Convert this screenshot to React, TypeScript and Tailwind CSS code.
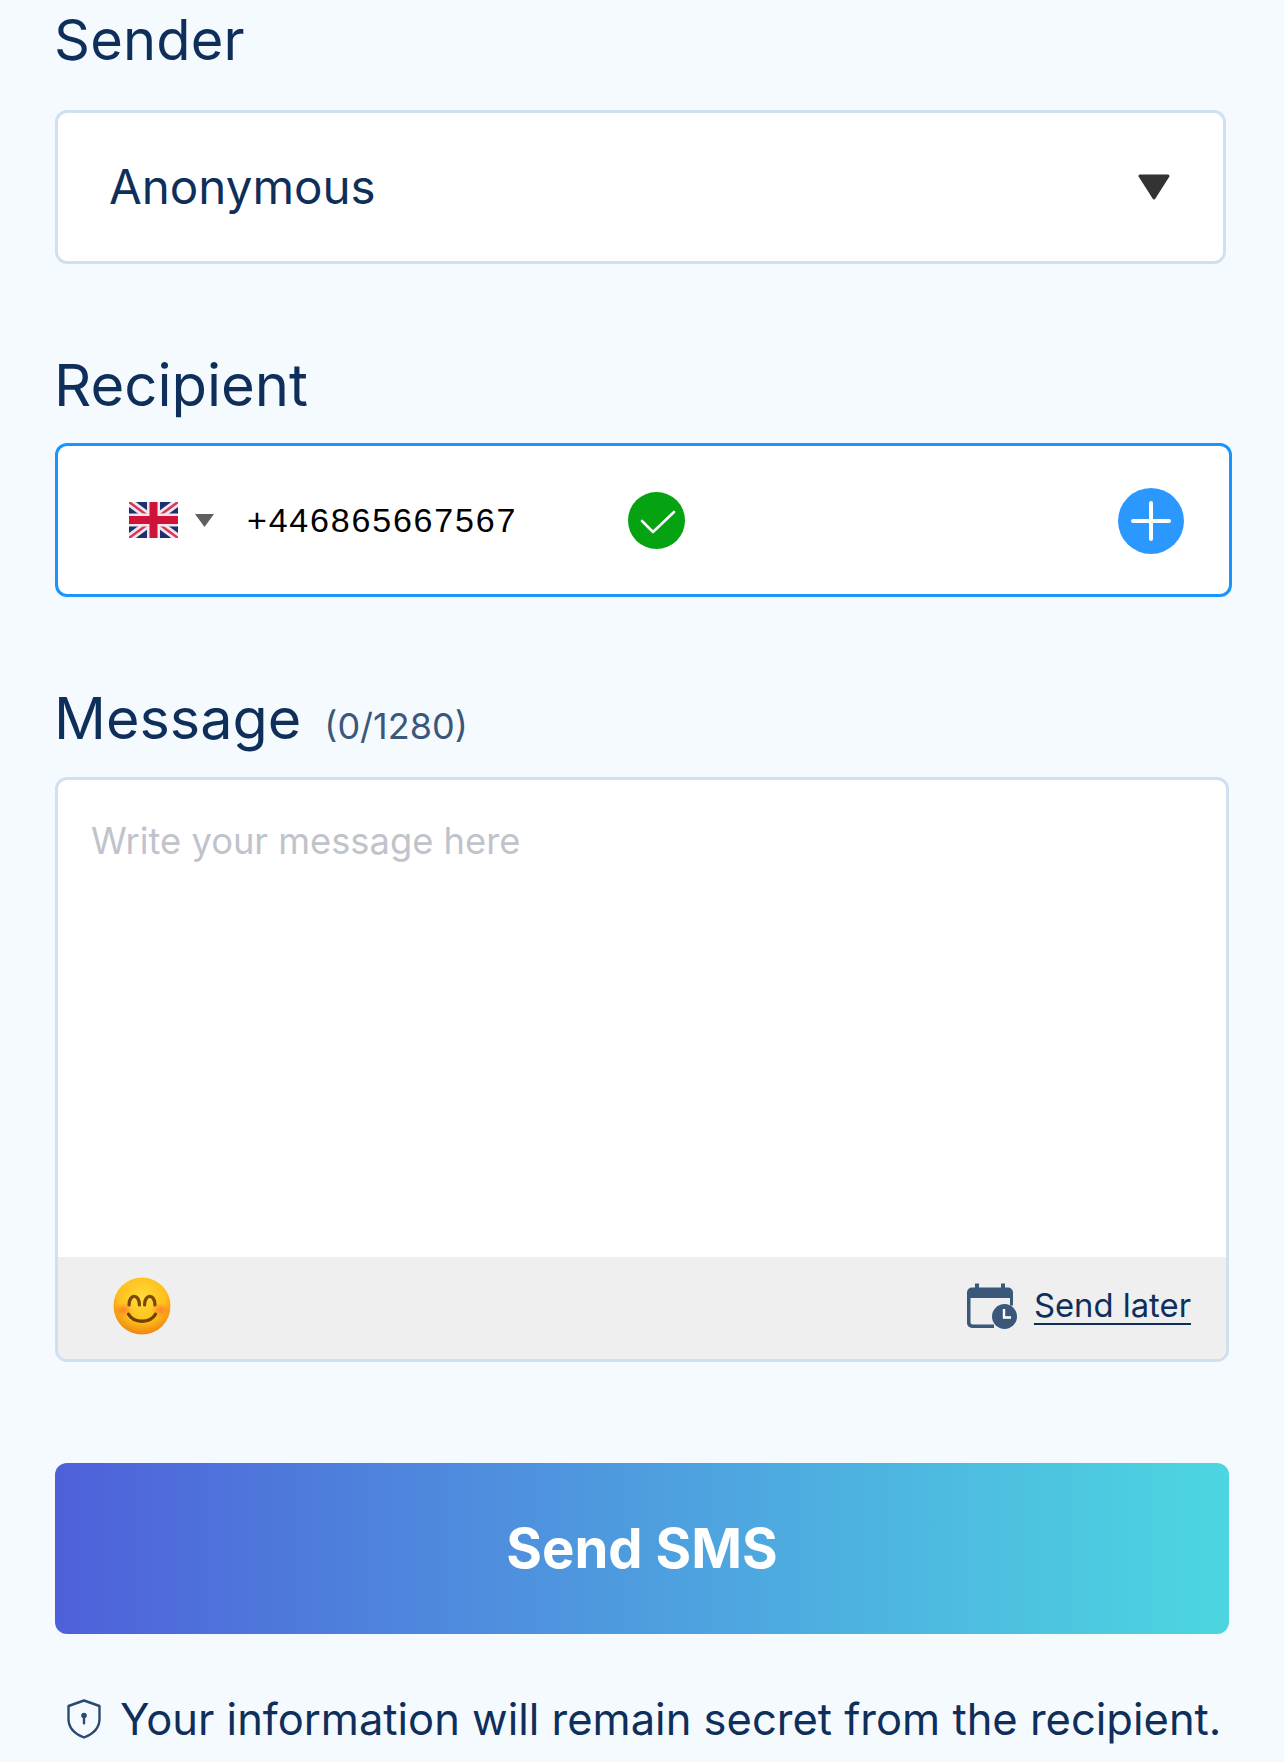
const ink = "text-[#0f2f5b]";

function FlagUK() {
  return (
    <svg width="49" height="36" viewBox="0 0 49 36" className="shrink-0">
      <rect width="49" height="36" fill="#1b2f72" />
      <path d="M0 0L49 36M49 0L0 36" stroke="#efe6ea" strokeWidth="8" />
      <path d="M0 0L49 36M49 0L0 36" stroke="#d6365a" strokeWidth="2.500" />
      <path d="M24.500 0V36M0 18H49" stroke="#f3e6ea" strokeWidth="13" />
      <path d="M24.500 0V36M0 18H49" stroke="#cf1238" strokeWidth="8" />
    </svg>
  );
}

function CheckBadge() {
  return (
    <svg width="57" height="57" viewBox="0 0 57 57" className="shrink-0">
      <circle cx="28.500" cy="28.500" r="28.500" fill="#05a312" />
      <path d="M14 29L25 40L46 20" fill="none" stroke="#fff" strokeWidth="2.600" strokeLinecap="round" strokeLinejoin="round" />
    </svg>
  );
}

function PlusButton() {
  return (
    <svg width="66" height="66" viewBox="0 0 66 66" className="mt-[1px] shrink-0">
      <circle cx="33" cy="33" r="33" fill="#2b98ff" />
      <path d="M33 15V51M15 33H51" stroke="#fff" strokeWidth="4" strokeLinecap="round" />
    </svg>
  );
}

function Smiley() {
  return (
    <svg width="58" height="58" viewBox="0 0 56 56">
      <defs>
        <radialGradient id="face" cx="50%" cy="36%" r="66%">
          <stop offset="0%" stopColor="#ffdc3c" />
          <stop offset="62%" stopColor="#ffc01c" />
          <stop offset="100%" stopColor="#ee7f0e" />
        </radialGradient>
        <radialGradient id="blush" cx="50%" cy="50%" r="50%">
          <stop offset="0%" stopColor="#ff6a30" stopOpacity="0.75" />
          <stop offset="100%" stopColor="#ff6a30" stopOpacity="0" />
        </radialGradient>
      </defs>
      <circle cx="28" cy="28" r="27.500" fill="url(#face)" />
      <ellipse cx="10" cy="32" rx="9" ry="7" fill="url(#blush)" />
      <ellipse cx="46" cy="32" rx="9" ry="7" fill="url(#blush)" />
      <path d="M15.500 27C15.500 16 25.500 16 25.500 27M30.500 27C30.500 16 40.500 16 40.500 27" fill="none" stroke="#7a4a08" strokeWidth="3.200" strokeLinecap="round" />
      <path d="M15 36C20 45 36 45 41 36" fill="none" stroke="#6e4206" strokeWidth="3.200" strokeLinecap="round" />
    </svg>
  );
}

function CalendarClock() {
  return (
    <svg width="50" height="46" viewBox="0 0 50 46" className="shrink-0">
      <path d="M8 0.500h4v4h22v-4h4v4h3a5 5 0 0 1 5 5v13h-3V15H3.500v24a2.500 2.500 0 0 0 2.500 2.500h21v3.500H5a5 5 0 0 1-5-5V9.500a5 5 0 0 1 5-5h3z" fill="#3b587a" />
      <circle cx="37.500" cy="33.500" r="12.500" fill="#3b587a" />
      <path d="M37 26V34.500H44" fill="none" stroke="#fff" strokeWidth="2.400" />
    </svg>
  );
}

function ShieldLock() {
  return (
    <svg width="34" height="40" viewBox="0 0 34 40" className="shrink-0">
      <path d="M17 1.500L32.500 7V20C32.500 29 26 35 17 38.500C8 35 1.500 29 1.500 20V7Z" fill="none" stroke="#2a4a72" strokeWidth="2.400" strokeLinejoin="round" />
      <circle cx="17" cy="16.500" r="2.800" fill="#2a4a72" />
      <rect x="15.800" y="17" width="2.400" height="8.500" rx="1" fill="#2a4a72" />
    </svg>
  );
}

export default function App() {
  return (
    <div className={`h-[1762px] overflow-hidden bg-[#f5faff] pl-[55px] font-['Inter',sans-serif] ${ink}`}>
      <p className="-ml-px pt-[4px] text-[56px] leading-[72px] tracking-[0.2px]">Sender</p>

      <div className="mt-[34px] flex h-[154px] w-[1171px] items-center justify-between rounded-[12px] border-[3px] border-[#d0e0f0] bg-white pl-[51px] pr-[52px]">
        <span className="text-[47.5px]">Anonymous</span>
        <svg width="34" height="26" viewBox="0 0 34 26">
          <path d="M3 2H31L17 24Z" fill="#333" stroke="#333" strokeWidth="3" strokeLinejoin="round" />
        </svg>
      </div>

      <p className="-ml-px mt-[85px] text-[58px] leading-[72px]">Recipient</p>

      <div className="mt-[22px] flex h-[154px] w-[1177px] items-center rounded-[12px] border-[3px] border-[#1a94ff] bg-white pl-[71px] pr-[45px]">
        <FlagUK />
        <svg width="19" height="13" viewBox="0 0 19 13" className="ml-[17px] shrink-0">
          <path d="M0 0H19L9.500 13Z" fill="#5f5f5f" />
        </svg>
        <span className="ml-[33px] w-[381px] font-['Liberation_Sans',sans-serif] text-[34px] tracking-[1.8px] text-black">+446865667567</span>
        <CheckBadge />
        <div className="flex-1" />
        <PlusButton />
      </div>

      <div className="-ml-px mt-[85px] flex items-baseline">
        <span className="text-[57.5px] leading-[72px]">Message</span>
        <span className="ml-[23px] text-[36px] text-[#3b587a]">(0/1280)</span>
      </div>

      <div className="mt-[23px] flex h-[585px] w-[1174px] flex-col overflow-hidden rounded-[12px] border-[3px] border-[#d0e0f0] bg-white">
        <div className="flex-1 px-[33px] pt-[37px] text-[36.3px] leading-[48px] text-[#c0c3cb]">Write your message here</div>
        <div className="flex h-[102px] items-center justify-between bg-[#efefef] pb-[4px] pl-[55px] pr-[35px]">
          <Smiley />
          <div className="flex items-center gap-[17px]">
            <CalendarClock />
            <span className="text-[32.8px] underline decoration-2 underline-offset-[6px]">Send later</span>
          </div>
        </div>
      </div>

      <button className="mt-[101px] flex h-[171px] w-[1174px] items-center justify-center rounded-[12px] bg-gradient-to-r from-[#4e60d9] to-[#4cd6e0] text-[54.5px] font-bold text-white">
        Send SMS
      </button>

      <div className="ml-[12px] mt-[55px] flex items-center gap-[19px]">
        <ShieldLock />
        <span className="text-[43.5px] leading-[60px]">Your information will remain secret from the recipient.</span>
      </div>
    </div>
  );
}
